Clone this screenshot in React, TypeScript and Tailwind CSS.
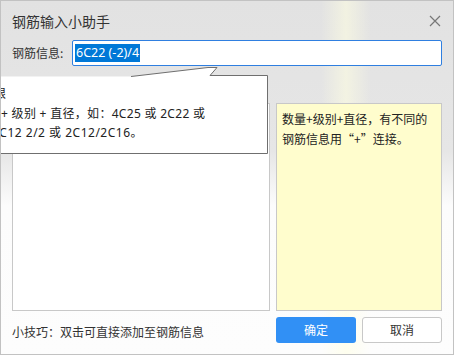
import React from "react";

const font = { fontFamily: '"Noto Sans CJK SC", "Noto Sans", sans-serif' };
const mixed = { fontFamily: '"Noto Sans", "Noto Sans CJK SC", sans-serif' };

export default function App() {
  return (
    <div
      className="relative w-[454px] h-[355px] overflow-hidden border border-[#c2c2c2] bg-[linear-gradient(90deg,rgba(255,255,255,0)_320px,rgba(255,255,225,0.55)_345px,rgba(255,255,255,0)_370px),linear-gradient(180deg,#e2e2e2_0px,#e6e6e6_150px,#fcfcfc_205px,#fdfdfd_355px)] text-[#333] flex flex-col px-[11px]"
      style={font}
    >
      {/* header */}
      <div className="h-[39px] flex items-center justify-between">
        <span className="text-[14px] text-[#333] leading-none">钢筋输入小助手</span>
        <svg width="12" height="12" viewBox="0 0 12 12" className="mr-[1px]">
          <path d="M1 1 L11 11 M11 1 L1 11" stroke="#777" strokeWidth="1.2" />
        </svg>
      </div>

      {/* input row */}
      <div className="flex items-center h-[26px]">
        <span className="w-[60px] text-[12px] text-[#333]">钢筋信息:</span>
        <div className="flex-1 h-[26px] border border-[#2f7fe0] rounded-[2px] bg-white flex items-center pl-[2px]">
          <span className="bg-[#0078d7] text-white text-[12.5px] leading-[18px] px-[1px]" style={mixed}>6C22 (-2)/4</span>
        </div>
      </div>

      {/* boxes */}
      <div className="mt-[37px] flex gap-[6px] h-[208px]">
        <div className="w-[258px] border border-[#c8c8c8] bg-white" />
        <div className="flex-1 border border-[#c8c8c8] bg-[#fffdcd] px-[5px] pt-[5px] text-[12px] leading-[20px] text-[#222]">
          <div>数量+级别+直径，有不同的</div>
          <div>钢筋信息用“+”连接。</div>
        </div>
      </div>

      {/* bottom row */}
      <div className="mt-[6px] flex items-center h-[26px]">
        <span className="flex-1 text-[12px] text-[#333] pt-[4px]">小技巧：双击可直接添加至钢筋信息</span>
        <div className="flex gap-[6px]">
          <button className="w-[80px] h-[26px] rounded-[3px] bg-[#3190f5] text-white text-[12px]">确定</button>
          <button className="w-[80px] h-[26px] rounded-[3px] bg-white border border-[#c8c8c8] text-[#333] text-[12px]">取消</button>
        </div>
      </div>

      {/* tooltip balloon overlay */}
      <div className="absolute left-[-1px] top-[65px] w-[275px] h-[90px]">
        <svg width="275" height="90" className="absolute left-0 top-0">
          <polygon points="-5,10.5 131,10.5 208,1.5 217,1.5 210,9.5 267.5,9.5 267.5,87.5 -5,87.5" fill="#ffffff" />
          <polyline points="131,10.5 208,1.5 217,1.5 210,9.5 267.5,9.5 267.5,87.5 -5,87.5" fill="none" stroke="#6f6f6f" strokeWidth="1" />
        </svg>
        <div className="absolute left-0 top-[18px] text-[12px] leading-[19.5px] text-[#222] whitespace-nowrap tracking-[0.3px]" style={mixed}>
          <div className="ml-[-6px]">根</div>
          <div className="ml-[1px]">+ 级别 + 直径，如：4C25 或 2C22 或</div>
          <div className="ml-[-8px] tracking-[0.5px]">2C12 2/2 或 2C12/2C16。</div>
        </div>
      </div>
    </div>
  );
}
